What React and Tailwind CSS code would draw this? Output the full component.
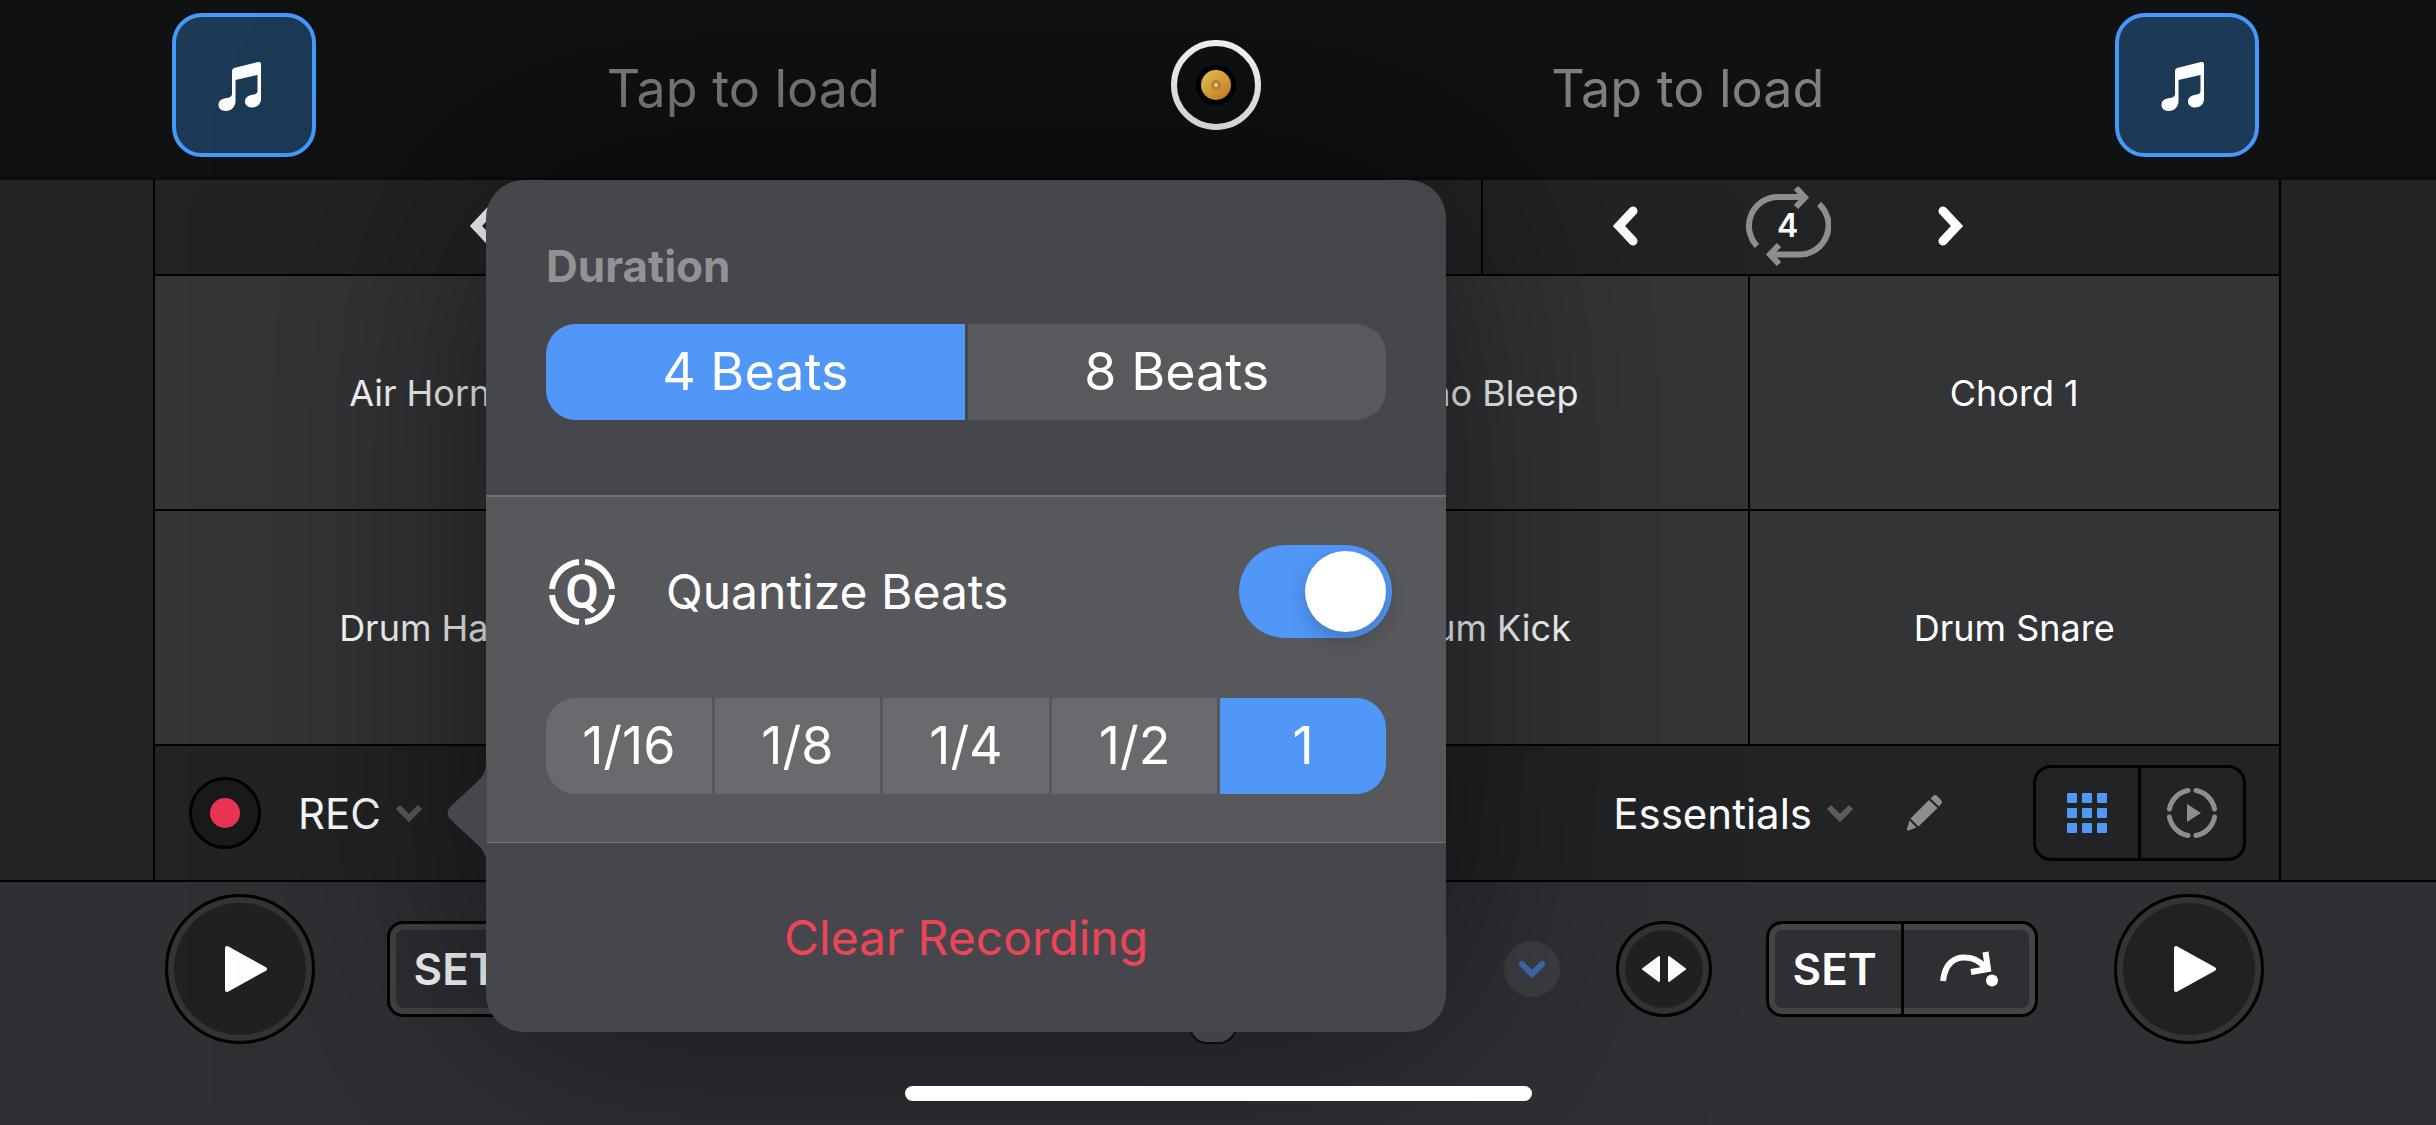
import { useState } from "react";

const pads = [
  "Air Horn", "", "Echo Bleep", "Chord 1",
  "Drum Hat", "", "Drum Kick", "Drum Snare",
];

const durations = ["4 Beats", "8 Beats"];
const quantizeSteps = ["1/16", "1/8", "1/4", "1/2", "1"];

/* Icons */

const MusicNote = () => (
  <svg width="44" height="50" viewBox="0 0 44 50" fill="#fff">
    <path d="M14 9Q14 7 16 6L40 0Q43-.5 43 2V37C43 42 39 45.5 34 45.5C30 45.5 27 43 27 39.5C27 35 31 33 36 32.5C38.5 32 39.5 31 39.5 29V13L17.500 18V39C17.500 45 13 49 8 49C3 49 .5 46 .5 43C.5 38.500 4 36.500 9 36C12 35.500 14 34.500 14 32Z" />
  </svg>
);

const BigChevron = ({ right }) => (
  <svg width="26" height="40" viewBox="0 0 26 40" fill="none" stroke="#fff" strokeWidth="9" strokeLinecap="round">
    <path d={right ? "M5 5L19 20L5 35" : "M21 5L7 20L21 35"} />
  </svg>
);

const SmallChevron = () => (
  <svg width="28" height="18" viewBox="0 0 28 18" fill="none" stroke="#5c5d5f" strokeWidth="6">
    <path d="M3 3L14 14L25 3" />
  </svg>
);

const LoopArrows = () => (
  <svg width="86" height="80" viewBox="0 0 86 80" fill="none" stroke="#8d8e90" strokeWidth="6">
    <path d="M12 60A29 29 0 0 1 31.500 11H60" />
    <path d="M51 2L60 11.500L51 21" />
    <path d="M74 18A29 29 0 0 1 54.500 68.500H26" />
    <path d="M34 59L25 68.500L34 78" />
  </svg>
);

const PlayTriangle = () => (
  <svg width="44" height="50" viewBox="0 0 44 50" fill="#fff" stroke="#fff" strokeWidth="4" strokeLinejoin="round">
    <path d="M3 4L41 25L3 46Z" />
  </svg>
);

const NudgeIcon = () => (
  <svg width="46" height="28" viewBox="0 0 46 28" fill="#fff" stroke="#fff" strokeWidth="2" strokeLinejoin="round">
    <path d="M18 2V26L2 14Z" />
    <path d="M28 2V26L44 14Z" />
  </svg>
);

const JumpIcon = () => (
  <svg width="60" height="36" viewBox="0 0 60 36" fill="none" stroke="#fff" strokeWidth="6">
    <path d="M4 30C6 12 16 6 26 6.500C34 6.500 41 10 46 16.500" />
    <path d="M46.500 1L49 18L32 21" />
    <circle cx="53" cy="29.500" r="6" fill="#fff" stroke="none" />
  </svg>
);

const PencilIcon = () => (
  <svg width="38" height="38" viewBox="0 0 38 38" fill="#8d8e90">
    <path d="M27 2Q29 0 31 2L35 6Q37 8 35 10L33 12.500L24.500 4.500Z" />
    <path d="M23 6L31.500 14L12.500 32.500L4.500 24.500Z" />
    <path d="M3.500 26.500L10.500 33.500L2.500 36.500Q.5 37 1 35Z" />
  </svg>
);

const GridIcon = () => (
  <svg width="42" height="42" viewBox="0 0 42 42" fill="#5197f8">
    {[1, 16, 31].map((y) =>
      [1, 16, 31].map((x) => <rect key={`${x}-${y}`} x={x} y={y} width="10" height="10" rx="1" />)
    )}
  </svg>
);

const SequenceIcon = () => (
  <svg width="52" height="52" viewBox="0 0 52 52" fill="none" stroke="#8d8e90" strokeWidth="5" strokeLinecap="round">
    <path d="M30 3.500A23 23 0 0 1 48.500 22M48.500 30A23 23 0 0 1 30 48.500M22 48.500A23 23 0 0 1 3.500 30M3.500 22A23 23 0 0 1 22 3.500" />
    <path d="M21 17L35 26L21 35Z" fill="#8d8e90" stroke="none" />
  </svg>
);

const QuantizeIcon = () => (
  <svg width="66" height="68" viewBox="0 0 66 68" fill="none" stroke="#fff" strokeWidth="6">
    <path d="M36 4A30 30 0 0 1 63 31M63 37A30 30 0 0 1 36 64M30 64A30 30 0 0 1 3 37M3 31A30 30 0 0 1 30 4" />
    <text x="33" y="50" textAnchor="middle" fill="#fff" stroke="none" fontSize="48" fontWeight="600" fontFamily="Roboto, sans-serif">Q</text>
  </svg>
);

/* Controls */

const DeckTile = ({ label }) => (
  <button
    aria-label={label}
    className="flex size-36 items-center justify-center rounded-[30px] border-4 border-[#4699fb] bg-[#1c3a56] pt-1 pr-2"
  >
    <MusicNote />
  </button>
);

const LoopControls = ({ beats }) => (
  <div className="flex items-center gap-[107px]">
    <button aria-label="Halve loop"><BigChevron /></button>
    <button aria-label="Loop" className="relative">
      <LoopArrows />
      <span className="absolute inset-0 flex items-center justify-center text-[32px] font-semibold">{beats}</span>
    </button>
    <button aria-label="Double loop"><BigChevron right /></button>
  </div>
);

const PlayButton = () => (
  <button
    aria-label="Play"
    className="flex size-[150px] items-center justify-center rounded-full border-3 border-black bg-[#202123] pl-3 inset-ring-6 inset-ring-[#333436]"
  >
    <PlayTriangle />
  </button>
);

const CueGroup = () => (
  <div className="flex h-24 w-[272px] overflow-hidden rounded-2xl border-3 border-black bg-[#2e2f33] inset-ring-6 inset-ring-[#434448]">
    <button className="flex-1 border-r-3 border-black text-[44px] font-semibold">SET</button>
    <button aria-label="Jump to cue" className="flex flex-1 items-center justify-center">
      <JumpIcon />
    </button>
  </div>
);

const NudgeButton = () => (
  <button
    aria-label="Nudge"
    className="flex size-24 items-center justify-center rounded-full border-3 border-black bg-[#202123] inset-ring-6 inset-ring-[#333436]"
  >
    <NudgeIcon />
  </button>
);

const MoreButton = () => (
  <button aria-label="More" className="flex size-14 items-center justify-center rounded-full bg-[#3e3f42]">
    <svg width="28" height="20" viewBox="0 0 28 20" fill="none" stroke="#416fb3" strokeWidth="6" strokeLinecap="round">
      <path d="M4 5L14 15L24 5" />
    </svg>
  </button>
);

const Segmented = ({ label, options, value, onChange, idle }) => (
  <div role="group" aria-label={label} className="flex h-24 gap-[3px] overflow-hidden rounded-[30px]">
    {options.map((option) => (
      <button
        key={option}
        aria-pressed={option === value}
        onClick={() => onChange(option)}
        className={`flex-1 text-[52px] ${option === value ? "bg-[#5197f8]" : idle}`}
      >
        {option}
      </button>
    ))}
  </div>
);

const RecordPopover = () => {
  const [duration, setDuration] = useState("4 Beats");
  const [quantize, setQuantize] = useState(true);
  const [step, setStep] = useState("1");

  return (
    <div className="absolute top-[180px] left-[486px] z-10 w-[960px] rounded-[38px] bg-[#46474c] shadow-[0_0_250px_rgba(0,0,0,0.55)]">
      <svg className="absolute top-[580px] -left-[39px]" width="40" height="106" viewBox="0 0 40 106" fill="#46474c">
        <path d="M40 0C39 11 37 15 31 21L4 46Q-3 53 4 60L31 85C37 91 39 95 40 106Z" />
      </svg>

      {/* Duration */}
      <div className="px-[60px] pt-14 pb-[75px]">
        <h2 className="mb-7 text-[44px] leading-[60px] font-bold text-[#929292]">Duration</h2>
        <Segmented label="Duration" options={durations} value={duration} onChange={setDuration} idle="bg-[#58595d]" />
      </div>

      {/* Quantize */}
      <div className="border-t-2 border-b border-t-[#6f7075] border-b-[#727377] bg-[#57585c] px-[60px] pt-12 pb-12">
        <div className="mb-[60px] flex items-center pl-[3px]">
          <QuantizeIcon />
          <label htmlFor="quantize" className="ml-[51px] flex-1 text-[48px] leading-[60px]">Quantize Beats</label>
          <input
            id="quantize"
            type="checkbox"
            role="switch"
            checked={quantize}
            onChange={(e) => setQuantize(e.target.checked)}
            className="-mr-1.5 flex h-[93px] w-[153px] appearance-none items-center rounded-full bg-[#77787c] px-1.5 before:size-[81px] before:rounded-full before:bg-white before:shadow-[0_8px_20px_rgba(0,0,0,0.2)] checked:justify-end checked:bg-[#5197f8]"
          />
        </div>
        <Segmented label="Quantize" options={quantizeSteps} value={step} onChange={setStep} idle="bg-[#696a6d]" />
      </div>

      <button className="h-[189px] w-full text-[48px] text-[#ee4458]">Clear Recording</button>
    </div>
  );
};

export default function App() {
  return (
    <div className="relative flex min-h-screen flex-col overflow-hidden bg-[#222325] font-['Inter',sans-serif] text-white">

      {/* Track header */}
      <header className="flex h-[180px] items-center border-b-3 border-[#0b0c0c] bg-[#101113] pr-[177px] pb-[7px] pl-[172px]">
        <DeckTile label="Left deck library" />
        <button className="flex-1 pt-2 text-[52px] text-[#808080]">Tap to load</button>
        <button aria-label="Turntable">
          <svg width="90" height="90" viewBox="0 0 90 90">
            <defs>
              <linearGradient id="label" x1="0" y1="0" x2="1" y2="1">
                <stop offset="0" stopColor="#f6dc60" />
                <stop offset="1" stopColor="#e28424" />
              </linearGradient>
            </defs>
            <circle cx="45" cy="45" r="42" fill="#101113" stroke="#fff" strokeWidth="6" />
            <circle cx="45" cy="45" r="20" fill="#000" />
            <circle cx="45" cy="45" r="15" fill="url(#label)" />
            <circle cx="45" cy="45" r="5" fill="#d98c30" />
            <circle cx="45" cy="45" r="2" fill="#f8e2c0" />
          </svg>
        </button>
        <button className="flex-1 pt-2 text-[52px] text-[#808080]">Tap to load</button>
        <DeckTile label="Right deck library" />
      </header>

      {/* Sampler */}
      <div className="border-b-2 border-black pr-[155px] pl-[153px]">
        <div className="border-x-2 border-black">
          <div className="grid h-24 grid-cols-[3fr_2fr_3fr] border-b-2 border-black">
            <div className="flex items-center justify-center border-r-2 border-black pb-0.5 pl-[186px]">
              <LoopControls />
            </div>
            <div className="border-r-2 border-black"></div>
            <div className="flex items-center justify-center pr-[186px] pb-0.5">
              <LoopControls beats={4} />
            </div>
          </div>

          <div className="grid grid-cols-4 gap-0.5 border-b-2 border-black bg-black">
            {pads.map((pad, i) => (
              <button key={i} className="h-[233px] bg-[#333436] text-[36px]">{pad}</button>
            ))}
          </div>

          <div className="flex h-[134px] items-center pr-[33px] pl-[34px]">
            <button aria-label="Record" className="flex size-[72px] items-center justify-center rounded-full border-3 border-black bg-[#191a1b]">
              <span className="size-[30px] rounded-full bg-[#ea3454]"></span>
            </button>
            <button className="ml-[37px] flex items-center gap-[14px] text-[42px]">
              REC <SmallChevron />
            </button>
            <button className="ml-auto flex items-center gap-[14px] text-[42px]">
              Essentials <SmallChevron />
            </button>
            <button aria-label="Edit pads" className="mr-[89px] ml-[52px]"><PencilIcon /></button>
            <div className="flex h-24 w-[213px] rounded-[18px] border-3 border-black">
              <button aria-label="Pads" className="flex flex-1 items-center justify-center border-r-3 border-black"><GridIcon /></button>
              <button aria-label="Sequencer" className="flex flex-1 items-center justify-center"><SequenceIcon /></button>
            </div>
          </div>
        </div>
      </div>

      {/* Transport */}
      <footer className="flex-1 bg-[#2f3034] pt-3">
        <div className="flex items-center justify-between pr-[172px] pl-[165px]">
          <div className="flex items-center">
            <PlayButton />
            <div className="mr-[54px] ml-[72px]"><CueGroup /></div>
            <NudgeButton />
            <div className="ml-14"><MoreButton /></div>
          </div>
          <div className="h-[150px] w-12 rounded-[18px] border-2 border-[#101112] bg-[#5a5b5f]"></div>
          <div className="flex items-center">
            <div className="mr-14"><MoreButton /></div>
            <NudgeButton />
            <div className="mr-[76px] ml-[54px]"><CueGroup /></div>
            <PlayButton />
          </div>
        </div>
        <div className="relative z-20 mx-auto mt-[42px] h-[15px] w-[627px] rounded-full bg-white"></div>
      </footer>

      <RecordPopover />
    </div>
  );
}
